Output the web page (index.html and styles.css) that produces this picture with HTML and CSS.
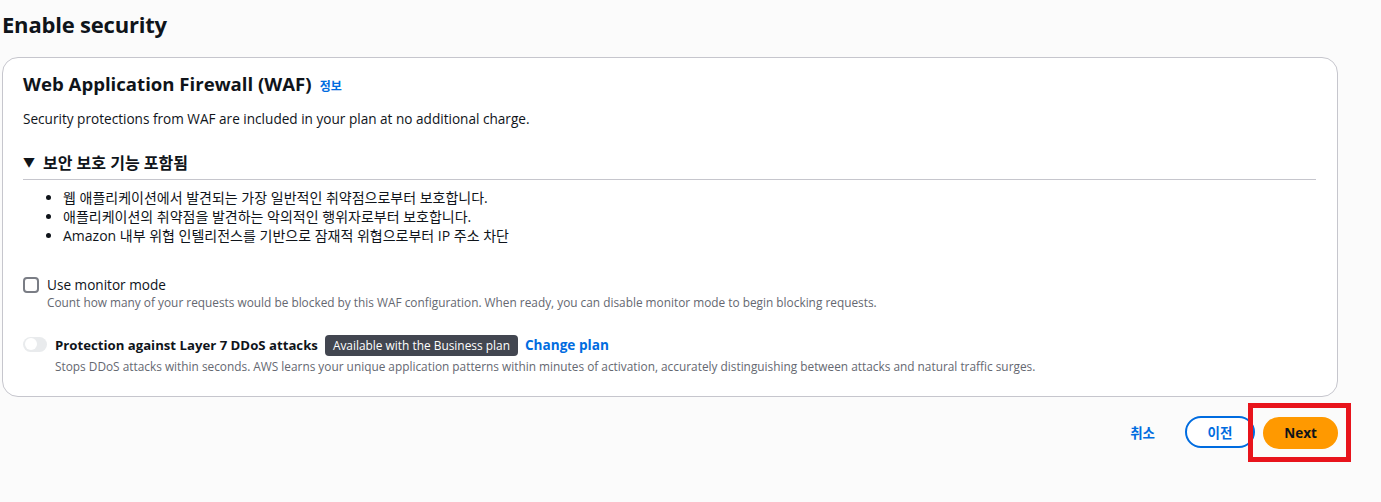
FILE: index.html
```html
<!DOCTYPE html>
<html>
<head>
<meta charset="utf-8">
<link rel="stylesheet" href="styles.css">
</head>
<body>
<div class="page">
  <h1 class="page-title">Enable security</h1>
  <div class="card">
    <div class="card-header">
      <h2 class="card-title">Web Application Firewall (WAF)</h2>
      <a class="info-link">정보</a>
    </div>
    <p class="card-desc">Security protections from WAF are included in your plan at no additional charge.</p>
    <div class="expander">
      <div class="expander-head"><span class="caret">▼</span><span>보안 보호 기능 포함됨</span></div>
      <ul class="features">
        <li>웹 애플리케이션에서 발견되는 가장 일반적인 취약점으로부터 보호합니다.</li>
        <li>애플리케이션의 취약점을 발견하는 악의적인 행위자로부터 보호합니다.</li>
        <li>Amazon 내부 위협 인텔리전스를 기반으로 잠재적 위협으로부터 IP 주소 차단</li>
      </ul>
    </div>
    <div class="option">
      <span class="checkbox"></span>
      <div class="option-body">
        <div class="option-label">Use monitor mode</div>
        <div class="option-desc">Count how many of your requests would be blocked by this WAF configuration. When ready, you can disable monitor mode to begin blocking requests.</div>
      </div>
    </div>
    <div class="option toggle-option">
      <span class="toggle"><span class="knob"></span></span>
      <div class="option-body">
        <div class="option-label strong-row"><strong>Protection against Layer 7 DDoS attacks</strong><span class="badge">Available with the Business plan</span><a class="change-link">Change plan</a></div>
        <div class="option-desc">Stops DDoS attacks within seconds. AWS learns your unique application patterns within minutes of activation, accurately distinguishing between attacks and natural traffic surges.</div>
      </div>
    </div>
  </div>
  <div class="actions">
    <a class="btn-link">취소</a>
    <button class="btn-outline">이전</button>
    <div class="highlight"><button class="btn-primary">Next</button></div>
  </div>
</div>
</body>
</html>
```
FILE: styles.css
```css
* { box-sizing: border-box; }
html, body { margin: 0; padding: 0; }
body {
  background: #fbfbfb;
  font-family: "Open Sans", "Noto Sans CJK KR", sans-serif;
  color: #0f141a;
  width: 1381px;
  height: 502px;
  overflow: hidden;
}
.page { padding: 8px 43px 0 2px; }
.page-title {
  margin: 0;
  font-size: 22px;
  font-weight: 700;
  line-height: 32px;
  letter-spacing: -0.2px;
}
.card {
  margin-top: 17px;
  background: #fff;
  border: 1px solid #c6c6cd;
  border-radius: 16px;
  padding: 12px 21px 22px 20px;
}
.card-header { display: flex; align-items: baseline; gap: 8px; }
.card-title { margin: 0; font-size: 18.6px; font-weight: 700; line-height: 28px; }
.info-link { color: #006ce0; font-size: 12px; font-weight: 700; }
.card-desc { margin: 11px 0 0; font-size: 13.6px; line-height: 20px; }
.expander { margin-top: 23px; }
.expander-head {
  display: flex; align-items: center; gap: 8px;
  font-size: 16px; font-weight: 700; line-height: 22px;
  padding-bottom: 5px;
  border-bottom: 1px solid #c6c6cd;
}
.caret { font-size: 12px; }
.features { margin: 8px 0 0; padding-left: 40px; font-size: 14px; line-height: 19.2px; }
.features li { height: 19.2px; line-height: 19.2px; }
.option { display: flex; gap: 8px; margin-top: 30px; }
.checkbox {
  width: 16px; height: 16px; margin-top: 1px;
  border: 2px solid #7a7d85; border-radius: 4px; background: #fff; flex: none;
}
.option-label { font-size: 13.6px; line-height: 18px; }
.option-desc { font-size: 11.85px; line-height: 16px; color: #656871; margin-top: 0; }
.toggle-option { margin-top: 25px; gap: 8px; }
.toggle {
  width: 24px; height: 15px; margin-top: 2px;
  background: #e9ebed; border-radius: 8px; position: relative; flex: none;
}
.knob {
  position: absolute; left: 1.5px; top: 1.5px; width: 12px; height: 12px;
  background: #fff; border-radius: 50%;
}
.strong-row { display: flex; align-items: center; gap: 7px; }
.strong-row strong { font-weight: 700; font-size: 13.2px; }
.badge {
  background: #424650; color: #fff; font-size: 11.9px; line-height: 21px;
  padding: 0 8px; border-radius: 4px;
}
.change-link { color: #006ce0; font-weight: 700; }
.toggle-option .option-desc { margin-top: 2px; }
.actions {
  display: flex; align-items: center; justify-content: flex-end;
  margin-top: 6px; margin-right: -13px;
}
.btn-link { color: #006ce0; font-weight: 700; font-size: 13.5px; margin-right: 30px; }
.btn-outline {
  font-family: inherit; font-size: 13.5px; font-weight: 700; color: #006ce0;
  background: #fff; border: 2px solid #006ce0; border-radius: 16px;
  width: 70px; height: 32px; margin-right: -7px;
}
.highlight {
  border: 5px solid #e8141c; padding: 9px 8px 8px 10px;
}
.btn-primary {
  font-family: inherit; font-size: 13.5px; font-weight: 700; color: #0f141a;
  background: #ff9900; border: none; border-radius: 16px;
  width: 75px; height: 32px; display: block;
}
```
